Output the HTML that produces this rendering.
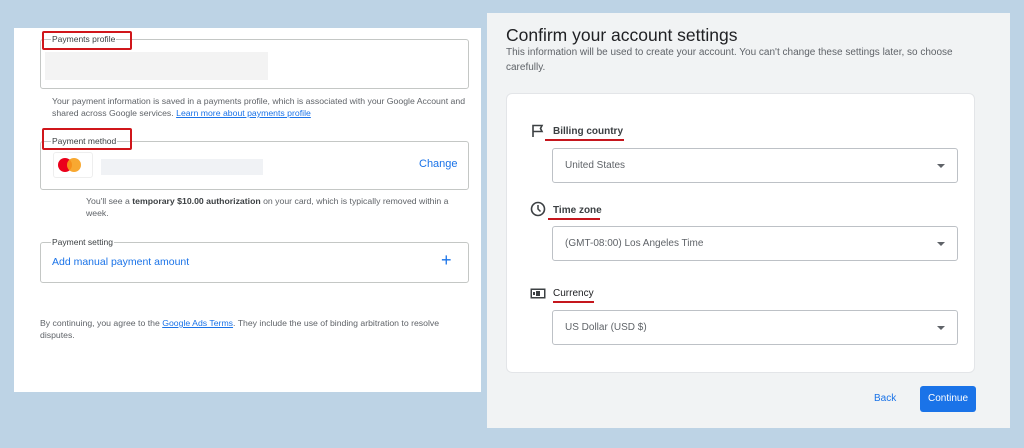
<!DOCTYPE html>
<html><head><style>
*{margin:0;padding:0;box-sizing:border-box}
body{width:1024px;height:448px;background:#bdd3e5;position:relative;overflow:hidden;font-family:"Liberation Sans",sans-serif}
.a{position:absolute}
.box{position:absolute;border:1px solid #c4c7c5;border-radius:3px;background:#fff}
.lbl{position:absolute;background:#fff;font-size:8.5px;color:#3c4043;padding:0 1px;line-height:10px}
.red{position:absolute;border:2px solid #d0161b;border-radius:2px}
.sm{font-size:8.7px;color:#5f6368;line-height:12px}
.blue{color:#1a73e8}
.sel{position:absolute;left:552px;width:406px;height:35px;border:1px solid #bdc1c6;border-radius:3px;background:#fff;font-size:10px;color:#5f6368;padding:11px 12px}
.sel:after{content:"";position:absolute;right:12px;top:15px;border-left:4px solid transparent;border-right:4px solid transparent;border-top:4px solid #5f6368}
.h{position:absolute;font-size:10px;font-weight:bold;color:#3c4043}
.ul{position:absolute;height:2px;background:#c5161d}
</style></head><body>
<div class="a" style="left:14px;top:28px;width:467px;height:364px;background:#fff"></div>

<div class="box" style="left:40px;top:39px;width:429px;height:50px"></div>
<div class="a" style="left:45px;top:52px;width:223px;height:28px;background:#f3f3f3"></div>
<div class="lbl" style="left:51px;top:34px">Payments profile</div>
<div class="red" style="left:42px;top:31px;width:90px;height:19px"></div>
<div class="a sm" style="left:52px;top:95px;width:420px">Your payment information is saved in a payments profile, which is associated with your Google Account and shared across Google services. <span class="blue" style="text-decoration:underline">Learn more about payments profile</span></div>

<div class="box" style="left:40px;top:141px;width:429px;height:49px"></div>
<div class="a" style="left:53px;top:152px;width:40px;height:26px;border:1px solid #eee;border-radius:3px;background:#fff"></div>
<div class="a" style="left:58px;top:158px;width:14px;height:14px;border-radius:50%;background:#eb001b"></div>
<div class="a" style="left:67px;top:158px;width:14px;height:14px;border-radius:50%;background:#f79e1b;opacity:.9"></div>
<div class="a" style="left:101px;top:159px;width:162px;height:16px;background:#f0f2f5"></div>
<div class="a blue" style="left:419px;top:158px;font-size:11px">Change</div>
<div class="lbl" style="left:51px;top:136px">Payment method</div>
<div class="red" style="left:42px;top:128px;width:90px;height:22px"></div>
<div class="a sm" style="left:86px;top:195px;width:380px">You'll see a <b style="color:#3c4043">temporary $10.00 authorization</b> on your card, which is typically removed within a week.</div>

<div class="box" style="left:40px;top:242px;width:429px;height:41px"></div>
<div class="lbl" style="left:51px;top:237px">Payment setting</div>
<div class="a blue" style="left:52px;top:256px;font-size:10.5px">Add manual payment amount</div>
<div class="a blue" style="left:441px;top:250px;font-size:18px;line-height:20px">+</div>
<div class="a sm" style="left:40px;top:317px;width:430px">By continuing, you agree to the <span class="blue" style="text-decoration:underline">Google Ads Terms</span>. They include the use of binding arbitration to resolve disputes.</div>

<div class="a" style="left:487px;top:13px;width:523px;height:415px;background:#f1f3f4"></div>
<div class="a" style="left:506px;top:25px;font-size:17.5px;color:#202124">Confirm your account settings</div>
<div class="a" style="left:506px;top:45px;width:472px;font-size:10px;color:#5f6368;line-height:15px">This information will be used to create your account. You can't change these settings later, so choose carefully.</div>
<div class="a" style="left:506px;top:93px;width:469px;height:280px;background:#fff;border-radius:6px;border:1px solid #e3e5e8"></div>

<svg class="a" style="left:531px;top:124px" width="14" height="14" viewBox="0 0 14 14"><path d="M2 13V1.5h9l-1.5 3 1.5 3H2" fill="none" stroke="#3c4043" stroke-width="1.6"/></svg>
<div class="h" style="left:553px;top:126px">Billing country</div>
<div class="ul" style="left:545px;top:139px;width:79px"></div>
<div class="sel" style="top:148px">United States</div>

<svg class="a" style="left:530px;top:201px" width="16" height="16" viewBox="0 0 16 16"><circle cx="8" cy="8" r="6.5" fill="none" stroke="#3c4043" stroke-width="1.6"/><path d="M8 4v4l2.5 2.5" fill="none" stroke="#3c4043" stroke-width="1.5"/></svg>
<div class="h" style="left:553px;top:205px">Time zone</div>
<div class="ul" style="left:548px;top:218px;width:52px"></div>
<div class="sel" style="top:226px">(GMT-08:00) Los Angeles Time</div>

<svg class="a" style="left:530px;top:288px" width="16" height="11" viewBox="0 0 16 11"><rect x="0.5" y="0.5" width="15" height="10" fill="#3c4043"/><rect x="2" y="2" width="12" height="7" fill="#fff"/><rect x="6" y="3" width="4" height="5" fill="#3c4043"/><rect x="3" y="4" width="2" height="3" fill="#3c4043"/></svg>
<div class="h" style="left:553px;top:288px;font-weight:normal;color:#202124">Currency</div>
<div class="ul" style="left:553px;top:301px;width:41px"></div>
<div class="sel" style="top:310px">US Dollar (USD $)</div>

<div class="a blue" style="left:874px;top:393px;font-size:10px">Back</div>
<div class="a" style="left:920px;top:386px;width:56px;height:26px;background:#1a73e8;border-radius:3px;color:#fff;font-size:10px;text-align:center;line-height:26px">Continue</div>
</body></html>
